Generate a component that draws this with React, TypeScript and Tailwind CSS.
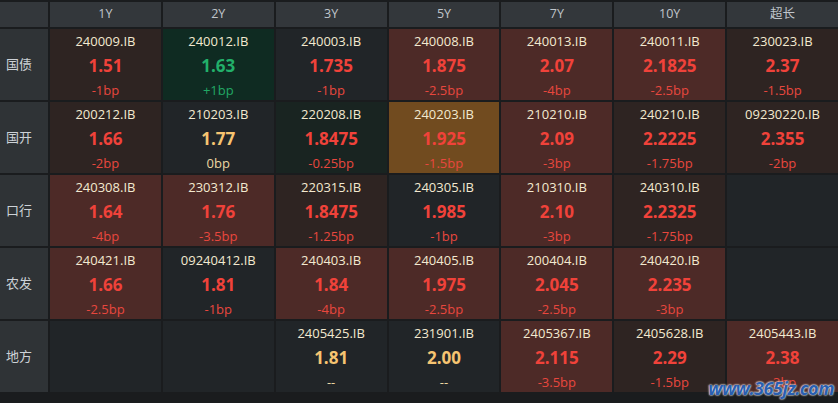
import React from "react";

type Cell = {
  code: string;
  rate: string;
  bp: string;
  tone: "red" | "brown" | "dark" | "green" | "dgreen" | "orange";
  color?: "red" | "green" | "yellow";
} | null;

const columns = ["1Y", "2Y", "3Y", "5Y", "7Y", "10Y", "超长"];

const rows: { name: string; cells: Cell[] }[] = [
  {
    name: "国债",
    cells: [
      { code: "240009.IB", rate: "1.51", bp: "-1bp", tone: "brown" },
      { code: "240012.IB", rate: "1.63", bp: "+1bp", tone: "green", color: "green" },
      { code: "240003.IB", rate: "1.735", bp: "-1bp", tone: "dark" },
      { code: "240008.IB", rate: "1.875", bp: "-2.5bp", tone: "red" },
      { code: "240013.IB", rate: "2.07", bp: "-4bp", tone: "red" },
      { code: "240011.IB", rate: "2.1825", bp: "-2.5bp", tone: "red" },
      { code: "230023.IB", rate: "2.37", bp: "-1.5bp", tone: "brown" },
    ],
  },
  {
    name: "国开",
    cells: [
      { code: "200212.IB", rate: "1.66", bp: "-2bp", tone: "brown" },
      { code: "210203.IB", rate: "1.77", bp: "0bp", tone: "dark", color: "yellow" },
      { code: "220208.IB", rate: "1.8475", bp: "-0.25bp", tone: "dgreen" },
      { code: "240203.IB", rate: "1.925", bp: "-1.5bp", tone: "orange" },
      { code: "210210.IB", rate: "2.09", bp: "-3bp", tone: "red" },
      { code: "240210.IB", rate: "2.2225", bp: "-1.75bp", tone: "brown" },
      { code: "09230220.IB", rate: "2.355", bp: "-2bp", tone: "brown" },
    ],
  },
  {
    name: "口行",
    cells: [
      { code: "240308.IB", rate: "1.64", bp: "-4bp", tone: "red" },
      { code: "230312.IB", rate: "1.76", bp: "-3.5bp", tone: "red" },
      { code: "220315.IB", rate: "1.8475", bp: "-1.25bp", tone: "brown" },
      { code: "240305.IB", rate: "1.985", bp: "-1bp", tone: "dark" },
      { code: "210310.IB", rate: "2.10", bp: "-3bp", tone: "red" },
      { code: "240310.IB", rate: "2.2325", bp: "-1.75bp", tone: "brown" },
      null,
    ],
  },
  {
    name: "农发",
    cells: [
      { code: "240421.IB", rate: "1.66", bp: "-2.5bp", tone: "red" },
      { code: "09240412.IB", rate: "1.81", bp: "-1bp", tone: "dark" },
      { code: "240403.IB", rate: "1.84", bp: "-4bp", tone: "red" },
      { code: "240405.IB", rate: "1.975", bp: "-2.5bp", tone: "red" },
      { code: "200404.IB", rate: "2.045", bp: "-2.5bp", tone: "red" },
      { code: "240420.IB", rate: "2.235", bp: "-3bp", tone: "red" },
      null,
    ],
  },
  {
    name: "地方",
    cells: [
      null,
      null,
      { code: "2405425.IB", rate: "1.81", bp: "--", tone: "dark", color: "yellow" },
      { code: "231901.IB", rate: "2.00", bp: "--", tone: "dark", color: "yellow" },
      { code: "2405367.IB", rate: "2.115", bp: "-3.5bp", tone: "red" },
      { code: "2405628.IB", rate: "2.29", bp: "-1.5bp", tone: "brown" },
      { code: "2405443.IB", rate: "2.38", bp: "-3bp", tone: "red" },
    ],
  },
];

const toneBg = {
  red: "bg-[#4d2a27]",
  brown: "bg-[#2e2422]",
  dark: "bg-[#212528]",
  green: "bg-[#0f2b22]",
  dgreen: "bg-[#192421]",
  orange: "bg-[#714b1f]",
};

const rateColor = {
  red: "text-[#f0423a]",
  green: "text-[#22b06a]",
  yellow: "text-[#f6c471]",
};

const bpColor = {
  red: "text-[#e8473e]",
  green: "text-[#22a865]",
  yellow: "text-[#ecd6a2]",
};

const BondCell = ({ cell }: { cell: Cell }) => {
  if (!cell) return <div className="bg-[#212528]" />;
  const c = cell.color ?? "red";
  return (
    <div className={`${toneBg[cell.tone]} flex flex-col items-center pt-[3px]`}>
      <p className="text-[13px] leading-[18px] text-[#f3e9d0]">{cell.code}</p>
      <p className={`mt-[5px] text-[17px] font-bold leading-[22px] ${rateColor[c]}`}>
        {cell.rate}
      </p>
      <p className={`mt-[4px] text-[13px] leading-[18px] ${bpColor[c]}`}>{cell.bp}</p>
    </div>
  );
};

export default function App() {
  return (
    <div
      className="relative h-[403px] w-[838px] overflow-hidden bg-[#1a1c1e] pt-[2px]"
      style={{ fontFamily: '"Open Sans", "Noto Sans CJK SC", sans-serif' }}
    >
      <div className="grid grid-cols-[48px_repeat(7,1fr)] grid-rows-[25px_repeat(5,71px)] gap-[2px]">
        <div className="bg-[#33373b]" />
        {columns.map((col) => (
          <div
            key={col}
            className="flex items-center justify-center bg-[#33373b] text-[12.5px] text-[#c0c6cc]"
          >
            {col}
          </div>
        ))}
        {rows.map((row) => (
          <React.Fragment key={row.name}>
            <div className="flex items-center bg-[#2f3336] pl-[6px] text-[13px] text-[#cdd2d7]">
              {row.name}
            </div>
            {row.cells.map((cell, idx) => (
              <BondCell key={idx} cell={cell} />
            ))}
          </React.Fragment>
        ))}
      </div>
      <div className="absolute bottom-[1px] right-[4px] text-[18px] font-bold italic tracking-tight text-[#2a5fb0] [text-shadow:0_0_2px_#fff,0_0_2px_#fff]">
        www.365jz.com
      </div>
    </div>
  );
}
